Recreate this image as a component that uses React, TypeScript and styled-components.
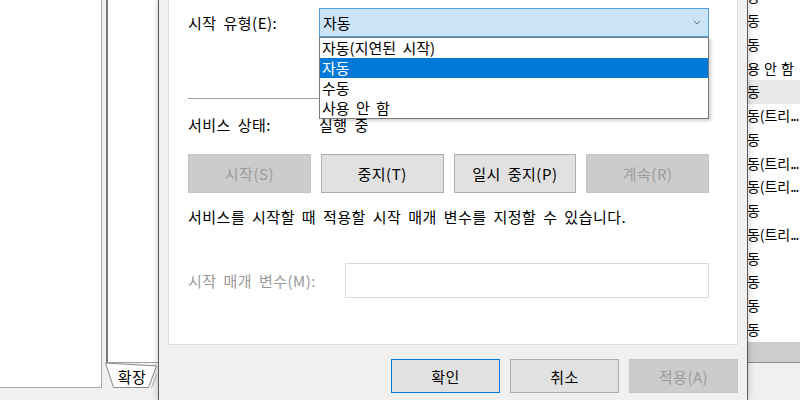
import React from 'react';
import styled, { createGlobalStyle } from 'styled-components';

const Global = createGlobalStyle`
  html, body { margin: 0; padding: 0; background: #f0f0f0; }
  body { font-family: "Noto Sans CJK KR", "Noto Sans", sans-serif; }
  #root { width: 800px; height: 400px; overflow: hidden; }
`;

const Screen = styled.div`
  width: 800px;
  height: 400px;
  display: flex;
  background: #f0f0f0;
  overflow: hidden;
  font-family: "Noto Sans CJK KR", "Noto Sans", sans-serif;
  font-size: 15px;
  color: #000;
`;

const LeftList = styled.div`
  flex: none;
  width: 102px;
  height: 388px;
  box-sizing: border-box;
  background: #fff;
  border-right: 1px solid #a9a9a9;
  border-bottom: 1px solid #a9a9a9;
`;

const MidPane = styled.div`
  flex: none;
  width: 52px;
  margin-left: 4px;
  height: 400px;
  display: flex;
  flex-direction: column;
`;

const MidWhite = styled.div`
  height: 363px;
  box-sizing: border-box;
  background: #fff;
  border-left: 2px solid #777;
  border-bottom: 1px solid #a0a0a0;
`;

const TabStrip = styled.div`
  height: 26px;
  display: flex;
`;

const Tab = styled.div`
  position: relative;
  width: 52px;
  height: 26px;
  margin-left: -1px;
  display: flex;
  align-items: center;
  justify-content: center;
  padding-left: 2px;
  padding-top: 1px;
  box-sizing: border-box;
  line-height: 20px;
  font-size: 15px;
  letter-spacing: 0.5px;
  svg { position: absolute; inset: 0; }
  span { position: relative; }
`;

const Dialog = styled.div`
  flex: none;
  position: relative;
  z-index: 1;
  width: 590px;
  height: 400px;
  box-sizing: border-box;
  background: #f0f0f0;
  border-left: 1px solid #5a5a5a;
  border-right: 1px solid #5a5a5a;
  padding: 0 9px;
  box-shadow: 0 0 7px rgba(0, 0, 0, 0.22);
  display: flex;
  flex-direction: column;
  letter-spacing: 0.5px;
  word-spacing: 3px;
`;

const Page = styled.div`
  height: 345px;
  box-sizing: border-box;
  background: #fff;
  border: 1px solid #dcdcdc;
  border-top: none;
  padding-left: 19px;
  display: flex;
  flex-direction: column;
`;

const Content = styled.div`
  width: 521px;
  display: flex;
  flex-direction: column;
`;

const FieldRow = styled.div<{ $top: number; $h: number }>`
  margin-top: ${p => p.$top}px;
  height: ${p => p.$h}px;
  display: flex;
  align-items: center;
  line-height: 20px;
`;

const Label = styled.div<{ $w: number; $disabled?: boolean }>`
  flex: none;
  width: ${p => p.$w}px;
  color: ${p => (p.$disabled ? '#9a9a9a' : '#000')};
  white-space: nowrap;
`;

const Combo = styled.div`
  position: relative;
  width: 390px;
  height: 29px;
  box-sizing: border-box;
  background: #cce4f7;
  border: 1px solid #569de5;
  display: flex;
  align-items: center;
  justify-content: space-between;
  padding: 0 7px 0 3px;
  letter-spacing: 0;
`;

const DropList = styled.ul`
  position: absolute;
  top: 28px;
  left: -1px;
  width: 390px;
  margin: 0;
  padding: 0;
  list-style: none;
  box-sizing: border-box;
  background: #fff;
  border: 1px solid #7a7a7a;
  box-shadow: 2px 2px 3px rgba(0, 0, 0, 0.18);
  z-index: 2;
`;

const DropItem = styled.li<{ $selected?: boolean }>`
  height: 20px;
  line-height: 20px;
  padding-left: 2px;
  background: ${p => (p.$selected ? '#0078d7' : 'transparent')};
  color: ${p => (p.$selected ? '#fff' : '#000')};
  white-space: nowrap;
`;

const Separator = styled.div`
  margin-top: 61px;
  height: 1px;
  background: #a0a0a0;
`;

const ServiceButtons = styled.div`
  margin-top: 19px;
  display: grid;
  grid-template-columns: repeat(4, 1fr);
  column-gap: 10px;
`;

const Btn = styled.div<{ $disabled?: boolean; $default?: boolean; $h: number }>`
  height: ${p => p.$h}px;
  box-sizing: border-box;
  display: flex;
  align-items: center;
  justify-content: center;
  background: ${p => (p.$disabled ? '#cccccc' : '#e1e1e1')};
  border: 1px solid ${p => (p.$disabled ? '#c4c4c4' : p.$default ? '#0078d7' : '#adadad')};
  color: ${p => (p.$disabled ? '#9c9c9c' : '#000')};
  white-space: nowrap;
`;

const Description = styled.div`
  margin-top: 14px;
  line-height: 20px;
  white-space: nowrap;
`;

const ParamInput = styled.div`
  width: 364px;
  height: 35px;
  box-sizing: border-box;
  border: 1px solid #d9d9d9;
  background: #fff;
`;

const DialogButtons = styled.div`
  margin-top: 14px;
  display: flex;
  justify-content: flex-end;
  gap: 10px;
`;

const DlgBtn = styled(Btn)`
  width: 109px;
`;

const RightPane = styled.div`
  flex: none;
  width: 52px;
  height: 400px;
  display: flex;
  flex-direction: column;
  overflow: hidden;
`;

const RightList = styled.div`
  height: 342px;
  background: #fff;
  overflow: hidden;
  font-size: 14px;
  word-spacing: 1px;
`;

const RightRow = styled.div<{ $hl?: boolean }>`
  height: 23.75px;
  line-height: 23.75px;
  text-indent: -14px;
  white-space: nowrap;
  background: ${p => (p.$hl ? '#e8e8e8' : 'transparent')};
  &:first-child { margin-top: -14.6px; }
`;

const Dots = styled.span`
  letter-spacing: -1.3px;
`;

const ScrollTrack = styled.div`
  height: 20px;
  background: #cdcdcd;
  border-bottom: 1px solid #8c8c8c;
`;

const StatusArea = styled.div`
  flex: 1;
  background: #f0f0f0;
`;

const Chevron = () => (
  <svg width="8" height="5" viewBox="0 0 8 5">
    <polyline points="0.8,0.8 4,4 7.2,0.8" fill="none" stroke="#6d6d6d" strokeWidth="1" />
  </svg>
);

const rightRows: { t: string; more?: boolean; hl?: boolean }[] = [
  { t: '자동' },
  { t: '자동' },
  { t: '자동' },
  { t: '사용 안 함' },
  { t: '자동', hl: true },
  { t: '자동(트리', more: true },
  { t: '자동' },
  { t: '자동(트리', more: true },
  { t: '자동(트리', more: true },
  { t: '자동' },
  { t: '자동(트리', more: true },
  { t: '자동' },
  { t: '자동' },
  { t: '자동' },
  { t: '자동' },
];

export default function App() {
  return (
    <>
      <Global />
      <Screen>
        <LeftList />
        <MidPane>
          <MidWhite />
          <TabStrip>
            <Tab>
              <svg width="52" height="26" viewBox="0 0 52 26">
                <polygon points="0.5,0 8.5,24.5 43.5,24.5 51.5,3" fill="#fff" stroke="#8a8a8a" strokeWidth="1" />
                <line x1="46.5" y1="25" x2="52" y2="11" stroke="#b0b0b0" strokeWidth="1" />
              </svg>
              <span>확장</span>
            </Tab>
          </TabStrip>
        </MidPane>
        <Dialog>
          <Page>
            <Content>
              <FieldRow $top={8} $h={29}>
                <Label $w={131}>시작 유형(E):</Label>
                <Combo>
                  <span>자동</span>
                  <Chevron />
                  <DropList>
                    <DropItem>자동(지연된 시작)</DropItem>
                    <DropItem $selected>자동</DropItem>
                    <DropItem>수동</DropItem>
                    <DropItem>사용 안 함</DropItem>
                  </DropList>
                </Combo>
              </FieldRow>
              <Separator />
              <FieldRow $top={16} $h={20}>
                <Label $w={131}>서비스 상태:</Label>
                <span>실행 중</span>
              </FieldRow>
              <ServiceButtons>
                <Btn $h={39} $disabled>시작(S)</Btn>
                <Btn $h={39}>중지(T)</Btn>
                <Btn $h={39}>일시 중지(P)</Btn>
                <Btn $h={39} $disabled>계속(R)</Btn>
              </ServiceButtons>
              <Description>서비스를 시작할 때 적용할 시작 매개 변수를 지정할 수 있습니다.</Description>
              <FieldRow $top={36} $h={35}>
                <Label $w={157} $disabled>시작 매개 변수(M):</Label>
                <ParamInput />
              </FieldRow>
            </Content>
          </Page>
          <DialogButtons>
            <DlgBtn $h={34} $default>확인</DlgBtn>
            <DlgBtn $h={34}>취소</DlgBtn>
            <DlgBtn $h={34} $disabled>적용(A)</DlgBtn>
          </DialogButtons>
        </Dialog>
        <RightPane>
          <RightList>
            {rightRows.map((r, i) => (
              <RightRow key={i} $hl={r.hl}>
                {r.t}
                {r.more && <Dots>...</Dots>}
              </RightRow>
            ))}
          </RightList>
          <ScrollTrack />
          <StatusArea />
        </RightPane>
      </Screen>
    </>
  );
}
